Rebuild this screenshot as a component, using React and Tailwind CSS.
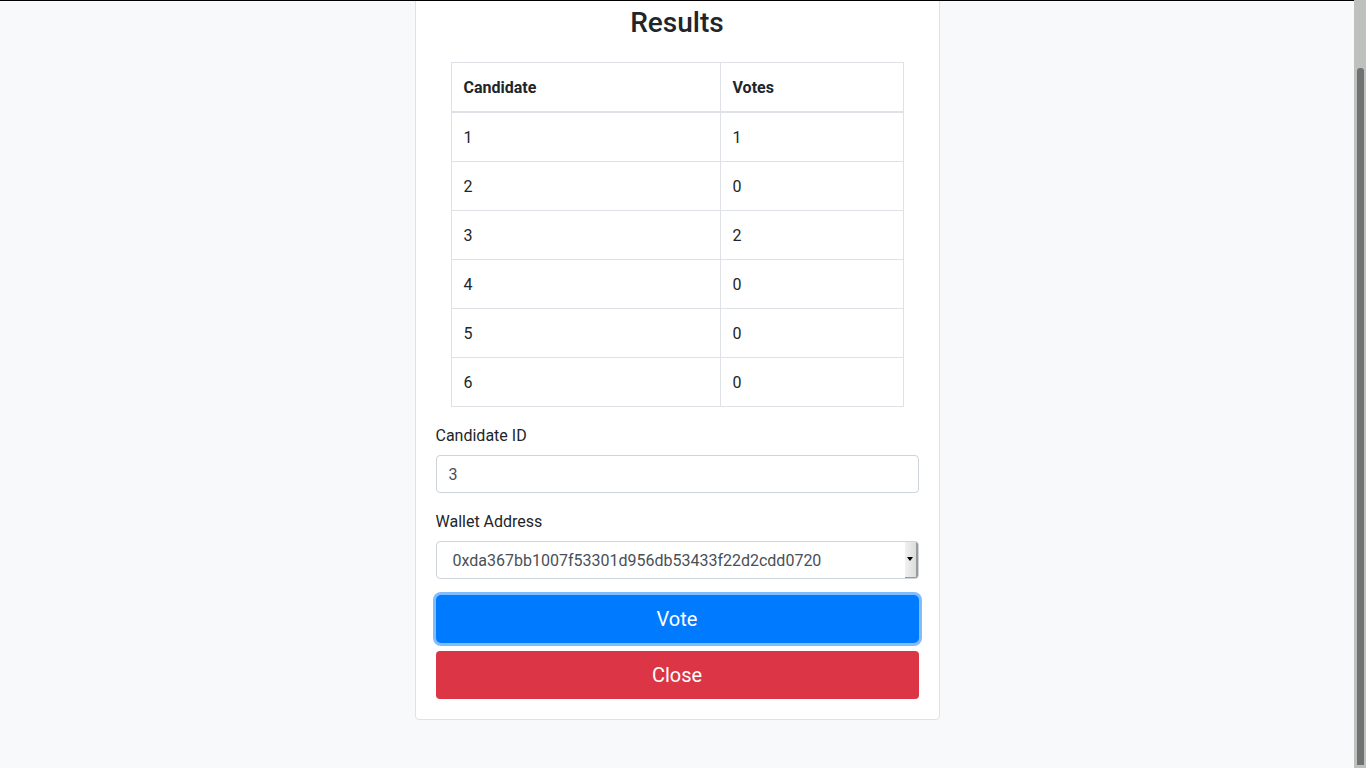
import React from "react";

const results = [
  { id: 1, votes: 1 },
  { id: 2, votes: 0 },
  { id: 3, votes: 2 },
  { id: 4, votes: 0 },
  { id: 5, votes: 0 },
  { id: 6, votes: 0 },
];

/* ---------------- RESULTS TABLE ---------------- */

function ResultsTable() {
  return (
    <table className="w-[453px] mx-auto border-collapse text-[16px] text-[#212529] mb-4">
      <thead>
        <tr>
          <th className="w-[269px] text-left font-bold px-3 pt-[13px] pb-[11px] leading-6 border border-[#dee2e6] border-b-2">
            Candidate
          </th>
          <th className="text-left font-bold px-3 pt-[13px] pb-[11px] leading-6 border border-[#dee2e6] border-b-2">
            Votes
          </th>
        </tr>
      </thead>
      <tbody>
        {results.map((r) => (
          <tr key={r.id}>
            <td className="px-3 pt-[13px] pb-[11px] leading-6 border border-[#dee2e6]">{r.id}</td>
            <td className="px-3 pt-[13px] pb-[11px] leading-6 border border-[#dee2e6]">{r.votes}</td>
          </tr>
        ))}
      </tbody>
    </table>
  );
}

/* ---------------- MAIN ---------------- */

export default function App() {
  return (
    <div
      className="h-screen w-full overflow-hidden flex bg-[#f8f9fa]"
      style={{ fontFamily: "Roboto, 'Liberation Sans', sans-serif" }}
    >
      <div className="flex-1 flex flex-col">
        <div className="h-px bg-black w-full shrink-0 relative z-10" />

        <div className="flex justify-center">
          <div className="w-[525px] -mt-[16px] bg-white border border-[#dee2e6] rounded-[4px] p-5">
            <h3 className="text-[28px] font-medium leading-[1.2] text-[#212529] text-center mb-[22px]">
              Results
            </h3>

            <ResultsTable />

            {/* FORM */}
            <div className="mb-4">
              <label className="block text-[16px] leading-6 text-[#212529] pt-px mb-[7px]">
                Candidate ID
              </label>
              <input
                defaultValue="3"
                className="w-full h-[38px] px-3 pt-[2px] border border-[#ced4da] rounded-[4px] text-[16px] text-[#495057] outline-none"
              />
            </div>

            <div className="mb-4">
              <label className="block text-[16px] leading-6 text-[#212529] pt-px mb-[7px]">
                Wallet Address
              </label>
              <div className="w-full h-[38px] flex border border-[#ced4da] rounded-[4px] bg-white overflow-hidden">
                <div className="flex-1 flex items-center px-4 pt-[2px] text-[16px] text-[#495057]">
                  0xda367bb1007f53301d956db53433f22d2cdd0720
                </div>
                <div className="w-[13px] flex items-center justify-center bg-gradient-to-r from-[#f1f1f1] to-[#dcdcdc] border-r-2 border-b border-[#9a9a9a]">
                  <div className="w-0 h-0 border-l-[3px] border-r-[3px] border-t-[4px] border-l-transparent border-r-transparent border-t-black" />
                </div>
              </div>
            </div>

            <button className="w-full h-[48px] rounded-[5px] bg-[#007bff] text-white text-[20px] mb-2 ring-[3px] ring-[#80bdff]">
              Vote
            </button>
            <button className="w-full h-[48px] rounded-[4px] bg-[#dc3545] text-white text-[20px]">
              Close
            </button>
          </div>
        </div>
      </div>

      {/* SCROLLBAR */}
      <div className="w-[12px] bg-[#bfc1bf] pt-[68px] flex justify-center">
        <div className="w-[7px] h-[697px] bg-[#707371] rounded-t-[3px] ml-[1px]" />
      </div>
    </div>
  );
}
